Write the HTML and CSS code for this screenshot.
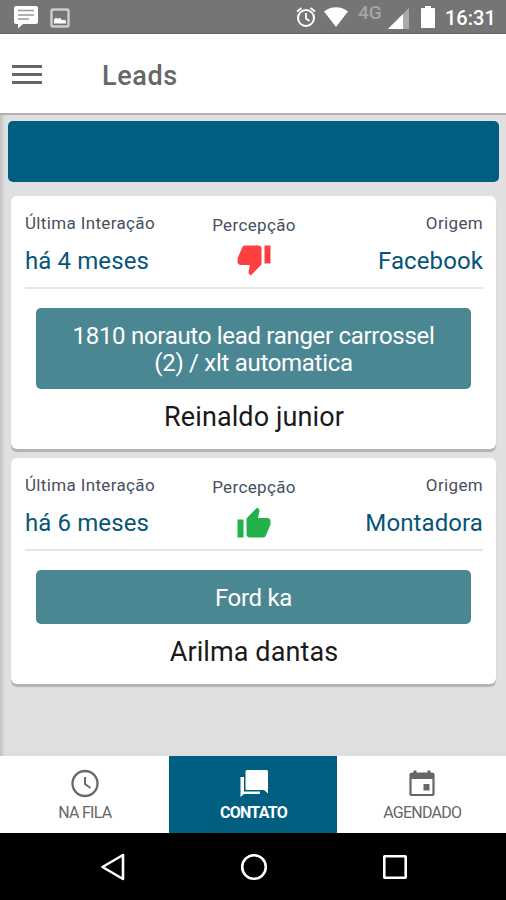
FILE: index.html
```html
<!DOCTYPE html>
<html lang="pt-BR">
<head>
    <meta charset="UTF-8">
    <meta name="viewport" content="width=device-width, initial-scale=1.0">
    <title>Leads</title>
    <link rel="stylesheet" href="styles.css">
</head>
<body>
    <!-- Status bar -->
    <div class="status-bar">
        <svg class="icon-message" width="24" height="24" viewBox="0 0 24 24">
            <path fill="#fff" d="M2 0h20a2 2 0 0 1 2 2v14a2 2 0 0 1-2 2H9l-5 4.500V18H2a2 2 0 0 1-2-2V2a2 2 0 0 1 2-2z"/>
            <path stroke="#999" stroke-width="1.3" d="M4 4.500h16M4 9h16M4 13h11"/>
        </svg>
        <svg class="icon-image" width="20" height="20" viewBox="0 0 20 20">
            <rect x="1.500" y="1.500" width="17" height="17" rx="1.500" fill="none" stroke="#ccc" stroke-width="2.500"/>
            <path fill="#fff" d="M4 15.500v-4l2-2 2 1.500 1.500-1.500 3 3 1.500-1 2 1.500v2.500z"/>
        </svg>
        <div class="status-right">
            <svg width="20" height="21" viewBox="0 0 20 21" fill="none" stroke="#fff">
                <circle cx="10" cy="12" r="8" stroke-width="2"/>
                <path stroke-width="1.800" d="M10 7v5.500l3.500 2.500M1 5.500L5.500 2M19 5.500L14.500 2"/>
            </svg>
            <svg class="icon-wifi" width="24" height="20" viewBox="0 0 24 20">
                <path fill="#fff" d="M0 4.500C7-1.300 17-1.300 24 4.500L12 20z"/>
            </svg>
            <span class="network">4G</span>
            <svg class="icon-signal" width="21" height="21" viewBox="0 0 21 21">
                <path fill="#aaa" d="M0 21L21 0v21z"/>
                <path fill="#fff" d="M0 21L15 6v15z"/>
            </svg>
            <svg class="icon-battery" width="14" height="22" viewBox="0 0 14 22">
                <path fill="#fff" d="M4 0h6v2h3a1 1 0 0 1 1 1v18a1 1 0 0 1-1 1H1a1 1 0 0 1-1-1V3a1 1 0 0 1 1-1h3z"/>
            </svg>
            <span class="time">16:31</span>
        </div>
    </div>

    <header class="header">
        <div class="menu-btn">
            <span></span>
            <span></span>
            <span></span>
        </div>
        <h1>Leads</h1>
    </header>

    <main class="content">
        <div class="banner"></div>

        <div class="card">
            <div class="card-info">
                <div class="info left">
                    <div class="label">Última Interação</div>
                    <div class="value">há 4 meses</div>
                </div>
                <div class="info middle">
                    <div class="label">Percepção</div>
                    <svg class="thumb thumb-down" width="36" height="36" viewBox="0 0 24 24">
                        <path d="M15 3H6c-.83 0-1.540.500-1.840 1.220l-3.020 7.050c-.09.230-.14.470-.14.730v2c0 1.100.9 2 2 2h6.310l-.95 4.570-.03.320c0 .410.170.790.440 1.060L9.830 23l6.590-6.590c.360-.36.580-.86.580-1.410V5c0-1.100-.9-2-2-2zm4 0v12h4V3h-4z"/>
                    </svg>
                </div>
                <div class="info right">
                    <div class="label">Origem</div>
                    <div class="value">Facebook</div>
                </div>
            </div>
            <div class="vehicle">1810 norauto lead ranger carrossel<br>(2) / xlt automatica</div>
            <div class="name">Reinaldo junior</div>
        </div>

        <div class="card">
            <div class="card-info">
                <div class="info left">
                    <div class="label">Última Interação</div>
                    <div class="value">há 6 meses</div>
                </div>
                <div class="info middle">
                    <div class="label">Percepção</div>
                    <svg class="thumb thumb-up" width="36" height="36" viewBox="0 0 24 24">
                        <path d="M1 21h4V9H1v12zm22-11c0-1.100-.9-2-2-2h-6.310l.95-4.570.03-.32c0-.41-.17-.79-.44-1.060L14.170 1 7.590 7.590C7.220 7.950 7 8.450 7 9v10c0 1.100.9 2 2 2h9c.83 0 1.540-.5 1.840-1.220l3.020-7.050c.09-.23.14-.47.14-.73v-2z"/>
                    </svg>
                </div>
                <div class="info right">
                    <div class="label">Origem</div>
                    <div class="value">Montadora</div>
                </div>
            </div>
            <div class="vehicle">Ford ka</div>
            <div class="name">Arilma dantas</div>
        </div>
    </main>

    <!-- Bottom tabs -->
    <nav class="tabs">
        <div class="tab">
            <svg width="32" height="32" viewBox="0 0 32 32" fill="none" stroke="#696969">
                <circle cx="16" cy="16.500" r="12.500" stroke-width="2.300"/>
                <path stroke-width="2" d="M16 10v7l5.500 4"/>
            </svg>
            <span>NA FILA</span>
        </div>
        <div class="tab active">
            <svg width="32" height="32" viewBox="0 0 32 32" fill="#fff">
                <path d="M9 3h19.500a1.500 1.500 0 0 1 1.500 1.500v22L26 23H9a1.500 1.500 0 0 1-1.500-1.500v-17A1.500 1.500 0 0 1 9 3z"/>
                <path d="M2.500 10H6v14.500h16V26a1 1 0 0 1-1 1H6l-3.500 3z"/>
            </svg>
            <span>CONTATO</span>
        </div>
        <div class="tab">
            <svg width="32" height="32" viewBox="0 0 32 32">
                <rect x="4.500" y="6.500" width="23" height="21.500" rx="1.500" fill="none" stroke="#666" stroke-width="2.200"/>
                <path fill="#666" d="M4 6h24v6H4zM7.500 3.500h3v4h-3zM21.500 3.500h3v4h-3zM17.500 17h6v6.500h-6z"/>
            </svg>
            <span>AGENDADO</span>
        </div>
    </nav>

    <!-- Android navigation -->
    <div class="system-nav">
        <svg width="28" height="28" viewBox="0 0 28 28"><path d="M24 2v24L3.500 14z"/></svg>
        <svg width="28" height="28" viewBox="0 0 28 28"><circle cx="14" cy="14" r="11.800"/></svg>
        <svg width="28" height="28" viewBox="0 0 28 28"><rect x="3.300" y="3.300" width="21.400" height="21.400" rx="0.500"/></svg>
    </div>
</body>
</html>
```

FILE: styles.css
```css
* {
    margin: 0;
    padding: 0;
    box-sizing: border-box;
}

body {
    font-family: Roboto, Arial, sans-serif;
    background: #e0e0e0;
    height: 900px;
    display: flex;
    flex-direction: column;
    overflow: hidden;
}

svg {
    display: block;
    flex-shrink: 0;
}

/* Status bar */
.status-bar {
    height: 34px;
    background: #757575;
    border-bottom: 1px solid #666;
    display: flex;
    align-items: flex-start;
    padding: 6px 10px 0 14px;
}

.icon-image {
    margin: 2px 0 0 12px;
}

.status-right {
    display: flex;
    margin-left: auto;
    color: #fff;
}

.icon-wifi {
    margin: 1px 0 0 8px;
}

.network {
    width: 25px;
    margin: -2px 0 0 10px;
    font-size: 19px;
    line-height: 18px;
    font-weight: 500;
    color: #a5a5a5;
}

.icon-signal {
    margin: 2px 0 0 5px;
}

.icon-battery {
    margin-left: 12px;
}

.time {
    width: 51px;
    margin-left: 10px;
    font-size: 20px;
    line-height: 24px;
    font-weight: 500;
}

/* Header */
.header {
    height: 79px;
    background: #fff;
    display: flex;
    align-items: center;
    padding: 2px 12px 0;
}

.menu-btn {
    width: 30px;
    display: flex;
    flex-direction: column;
    gap: 5px;
}

.menu-btn span {
    height: 3px;
    background: #666;
}

.header h1 {
    margin: 3px 0 0 60px;
    font-size: 27px;
    font-weight: 500;
    letter-spacing: 0.6px;
    color: #666;
}

/* Leads */
.content {
    flex: 1;
    padding: 6px 10px 0 11px;
    border-top: 2px solid #b0b0b0;
    box-shadow: inset 4px 0 4px -2px #bbb;
}

.banner {
    height: 61px;
    margin: 0 -3px 14px;
    background: #005f80;
    border-radius: 5px;
}

.card {
    background: #fff;
    border-radius: 6px;
    margin-bottom: 9px;
    padding: 0 13px 0 14px;
    height: 253px;
    box-shadow: 0 3px 1px #b3b3b3;
}

.card:last-child {
    height: 226px;
}

.card-info {
    height: 93px;
    padding-top: 17px;
    border-bottom: 2px solid #e6e6e6;
    display: flex;
}

.info {
    flex: 1;
}

.middle {
    display: flex;
    flex-direction: column;
    align-items: center;
    padding-top: 2px;
}

.right {
    text-align: right;
}

.label {
    font-size: 17px;
    line-height: 20px;
    letter-spacing: 0.35px;
    color: #46505f;
}

.value {
    margin-top: 13px;
    font-size: 24px;
    line-height: 31px;
    letter-spacing: 0.1px;
    color: #075578;
}

.thumb {
    margin-top: 6px;
}

.thumb-down {
    fill: #ff4040;
}

.thumb-up {
    margin-top: 9px;
    fill: #22b24c;
}

.vehicle {
    margin: 19px 12px 0 11px;
    padding: 15px 0 12px;
    border-radius: 5px;
    background: #4b8793;
    text-align: center;
    font-size: 24px;
    line-height: 27px;
    letter-spacing: -0.3px;
    color: #fff;
}

.name {
    margin-top: 12px;
    text-align: center;
    font-size: 27px;
    line-height: 32px;
    letter-spacing: 0.1px;
    color: #1a1a1a;
}

/* Bottom tabs */
.tabs {
    height: 77px;
    display: flex;
    background: #fff;
}

.tab {
    flex: 1;
    display: flex;
    flex-direction: column;
    align-items: center;
    padding: 11px 0 0 1px;
    font-size: 16px;
    line-height: 18px;
    letter-spacing: -0.75px;
    color: #666;
}

.tab span {
    margin-top: 5px;
}

.tab.active {
    background: #005f80;
    color: #fff;
    font-weight: 700;
}

/* Android navigation */
.system-nav {
    height: 67px;
    background: #000;
    display: flex;
    justify-content: center;
    align-items: center;
    gap: 113px;
    padding-left: 2px;
}

.system-nav svg {
    fill: none;
    stroke: #fff;
    stroke-width: 2.6;
    stroke-linejoin: round;
}
```
